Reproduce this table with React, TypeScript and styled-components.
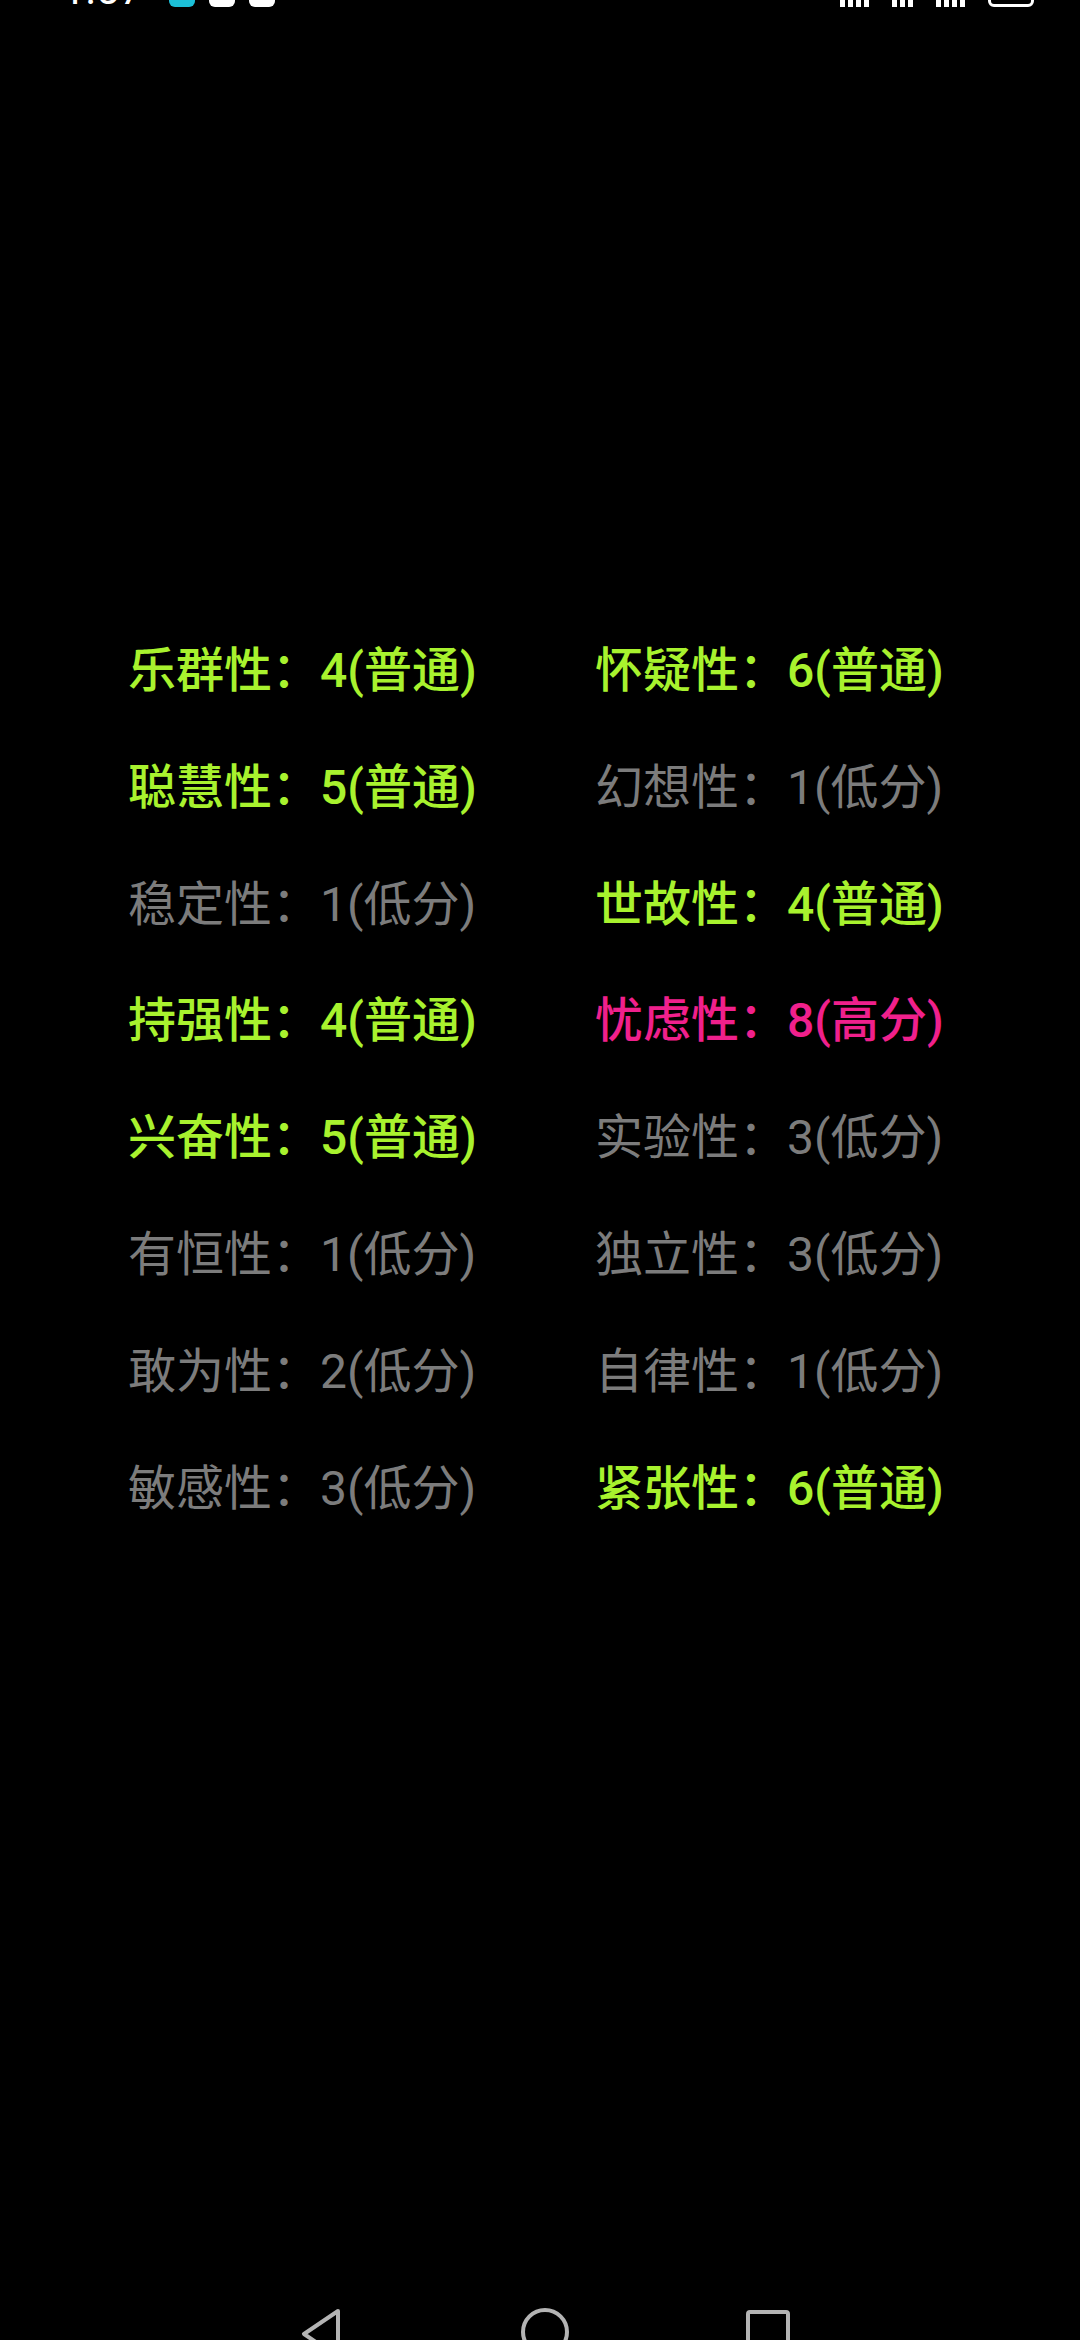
import React from "react"
import styled, { createGlobalStyle } from "styled-components"

type Level = "normal" | "low" | "high"

const traits: { name: string; score: number; level: Level }[] = [
  { name: "乐群性", score: 4, level: "normal" },
  { name: "怀疑性", score: 6, level: "normal" },
  { name: "聪慧性", score: 5, level: "normal" },
  { name: "幻想性", score: 1, level: "low" },
  { name: "稳定性", score: 1, level: "low" },
  { name: "世故性", score: 4, level: "normal" },
  { name: "持强性", score: 4, level: "normal" },
  { name: "忧虑性", score: 8, level: "high" },
  { name: "兴奋性", score: 5, level: "normal" },
  { name: "实验性", score: 3, level: "low" },
  { name: "有恒性", score: 1, level: "low" },
  { name: "独立性", score: 3, level: "low" },
  { name: "敢为性", score: 2, level: "low" },
  { name: "自律性", score: 1, level: "low" },
  { name: "敏感性", score: 3, level: "low" },
  { name: "紧张性", score: 6, level: "normal" },
]

const levelLabel: Record<Level, string> = {
  normal: "普通",
  low: "低分",
  high: "高分",
}

const levelColor: Record<Level, string> = {
  normal: "#a8f22e",
  low: "#7c7c7c",
  high: "#f0208c",
}

const GlobalStyle = createGlobalStyle`
  html, body {
    margin: 0;
    padding: 0;
    background: #000;
  }
  body {
    font-family: Roboto, "Noto Sans CJK SC", sans-serif;
  }
`

const App: React.FC = () => {
  return (
    <Screen>
      <GlobalStyle />
      <StatusBar>
        <StatusLeft>
          <Clock>1:57</Clock>
          <NotifIcon $bg="#1cc0d8" />
          <NotifIcon $bg="#ffffff" $dot="#6a6ae8" />
          <NotifIcon $bg="#ffffff" $dot="#3a7be8" />
        </StatusLeft>
        <StatusRight>
          <SysGlyph $w={30} />
          <SysGlyph $w={22} />
          <SysGlyph $w={30} />
          <Battery />
        </StatusRight>
      </StatusBar>

      <TraitGrid>
        {traits.map(t => (
          <TraitCell key={t.name} $level={t.level}>
            {t.name}：{t.score}({levelLabel[t.level]})
          </TraitCell>
        ))}
      </TraitGrid>

      <NavBar>
        <NavButton>
          <svg width="46" height="52" viewBox="0 0 46 52">
            <path
              d="M40 4 L6 27 L40 50 Z"
              fill="none"
              stroke="#b4b4b4"
              strokeWidth="4"
              strokeLinejoin="round"
            />
          </svg>
        </NavButton>
        <NavButton>
          <svg width="50" height="50" viewBox="0 0 50 50">
            <circle cx="25" cy="25" r="22" fill="none" stroke="#b4b4b4" strokeWidth="4" />
          </svg>
        </NavButton>
        <NavButton $top={3}>
          <svg width="44" height="44" viewBox="0 0 44 44">
            <rect x="2" y="2" width="40" height="40" rx="2" fill="none" stroke="#b4b4b4" strokeWidth="4" />
          </svg>
        </NavButton>
      </NavBar>
    </Screen>
  )
}

export default App

const Screen = styled.div`
  width: 1080px;
  height: 2340px;
  overflow: hidden;
  background: #000;
  display: flex;
  flex-direction: column;
  justify-content: space-between;
`

const StatusBar = styled.div`
  height: 7px;
  overflow: hidden;
  display: flex;
  justify-content: space-between;
  align-items: flex-end;
  padding: 0 46px 0 62px;
`

const StatusLeft = styled.div`
  display: flex;
  align-items: flex-end;
  gap: 14px;
`

const StatusRight = styled.div`
  display: flex;
  align-items: flex-end;
  gap: 22px;
`

const Clock = styled.span`
  color: #fff;
  font-family: Roboto, sans-serif;
  font-size: 42px;
  line-height: 34px;
  margin-right: 12px;
`

const NotifIcon = styled.span<{ $bg: string; $dot?: string }>`
  width: 26px;
  height: 30px;
  border-radius: 6px;
  background: ${p =>
    p.$dot
      ? `radial-gradient(circle at 50% 30%, ${p.$dot} 0 9px, ${p.$bg} 10px)`
      : p.$bg};
`

const SysGlyph = styled.span<{ $w: number }>`
  width: ${p => p.$w}px;
  height: 30px;
  background: repeating-linear-gradient(90deg, #fff 0 5px, transparent 5px 8px);
`

const Battery = styled.span`
  width: 46px;
  height: 30px;
  border: 3px solid #fff;
  border-radius: 6px;
  box-sizing: border-box;
`

const TraitGrid = styled.div`
  display: grid;
  grid-template-columns: 467px 1fr;
  grid-auto-rows: 116.8px;
  padding-left: 128px;
  margin-bottom: auto;
  margin-top: 606px;
`

const TraitCell = styled.div<{ $level: Level }>`
  font-family: Roboto, "Noto Sans CJK SC", sans-serif;
  font-size: 48px;
  line-height: 116.8px;
  white-space: nowrap;
  color: ${p => levelColor[p.$level]};
  font-weight: ${p => (p.$level === "low" ? 400 : 500)};
`

const NavBar = styled.div`
  height: 33px;
  overflow: hidden;
  display: flex;
  justify-content: center;
  align-items: flex-start;
  gap: 176px;
  padding-left: 8px;
`

const NavButton = styled.div<{ $top?: number }>`
  display: flex;
  margin-top: ${p => p.$top ?? 0}px;
`
